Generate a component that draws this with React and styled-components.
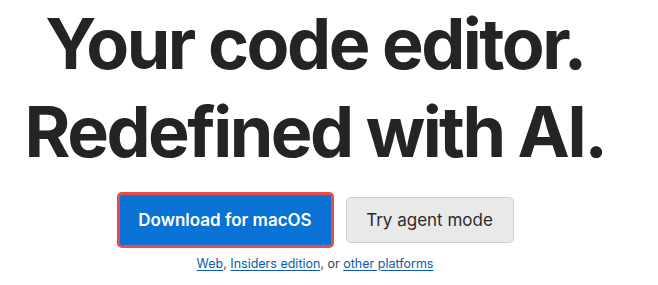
import React from "react";
import styled, { createGlobalStyle } from "styled-components";

const GlobalStyle = createGlobalStyle`
  html, body {
    margin: 0;
    padding: 0;
    background: #ffffff;
  }
  body {
    font-family: Inter, "Noto Sans", "Liberation Sans", sans-serif;
    -webkit-font-smoothing: antialiased;
  }
`;

const Hero = styled.section`
  width: 658px;
  padding-right: 28px;
  box-sizing: border-box;
  display: flex;
  flex-direction: column;
  align-items: center;
  text-align: center;
`;

const Title = styled.h1`
  margin: 0;
  font-size: 70px;
  line-height: 88px;
  font-weight: 700;
  letter-spacing: -2.5px;
  color: #242424;
  white-space: nowrap;
`;

const Actions = styled.div`
  display: flex;
  align-items: center;
  gap: 12px;
  margin-top: 16px;
`;

const Button = styled.a`
  display: inline-flex;
  align-items: center;
  justify-content: center;
  box-sizing: border-box;
  border-radius: 5px;
  font-size: 17px;
  text-decoration: none;
  cursor: pointer;
  white-space: nowrap;
`;

const PrimaryButton = styled(Button)`
  width: 217px;
  height: 56px;
  background: #0a72d4;
  border: 3px solid #ea4a4a;
  box-shadow: inset 0 0 0 1px #0a72d4;
  color: #ffffff;
  font-weight: 600;
`;

const SecondaryButton = styled(Button)`
  width: 168px;
  height: 46px;
  background: #e9e9e9;
  border: 1px solid #cfcfcf;
  color: #2b2b2b;
  font-weight: 400;
`;

const Alternatives = styled.p`
  margin: 8px 0 0;
  font-size: 12.5px;
  line-height: 16px;
  color: #444444;
`;

const AltLink = styled.a`
  color: #0b5cad;
  text-decoration: underline;
  text-underline-offset: 2px;
`;

export default function App() {
  return (
    <>
      <GlobalStyle />
      <Hero>
        <Title>
          Your code editor.
          <br />
          Redefined with AI.
        </Title>
        <Actions>
          <PrimaryButton href="#">Download for macOS</PrimaryButton>
          <SecondaryButton href="#">Try agent mode</SecondaryButton>
        </Actions>
        <Alternatives>
          <AltLink href="#">Web</AltLink>, <AltLink href="#">Insiders edition</AltLink>, or{" "}
          <AltLink href="#">other platforms</AltLink>
        </Alternatives>
      </Hero>
    </>
  );
}
